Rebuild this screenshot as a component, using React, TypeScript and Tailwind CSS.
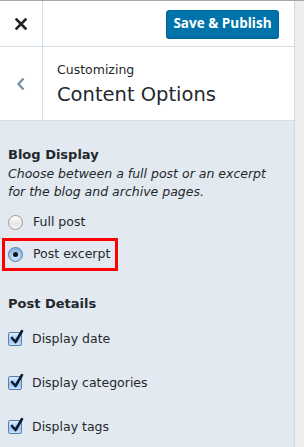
import React from 'react';

const font = { fontFamily: '"DejaVu Sans", "Open Sans", sans-serif' };

const Radio = ({ checked }: { checked?: boolean }) => (
    <span
        className={`w-[15px] h-[15px] rounded-full border flex items-center justify-center shrink-0 ${
            checked
                ? 'border-[#5a7fae] bg-[radial-gradient(circle_at_50%_70%,#d6ecff_0%,#9cc4ef_55%,#6a9fd8_100%)]'
                : 'border-[#9a9a9a] bg-[linear-gradient(#ffffff,#e6e6e6_60%,#f6f6f6)]'
        }`}
    >
        {checked && <span className="w-[5px] h-[5px] rounded-full bg-[#111]" />}
    </span>
);

const Checkbox = () => (
    <span className="relative w-[14px] h-[14px] rounded-[2px] border border-[#5a7fae] bg-[linear-gradient(#d9ecff,#9cc7f2_60%,#c5e2ff)] shrink-0">
        <svg className="absolute -top-[4px] left-[1px]" width="14" height="16" viewBox="0 0 14 16">
            <path d="M2 9 L5.5 13 L12 2" fill="none" stroke="#0d1b2e" strokeWidth="2.6" strokeLinecap="round" strokeLinejoin="round" />
        </svg>
    </span>
);

export default function App() {
    return (
        <div className="w-[304px] h-[447px] bg-[#eeeeee] border-t border-[#a7a7a7] overflow-hidden" style={font}>
            <div className="w-[295px] h-full bg-[#e3e9f0] border-r border-[#cfdae5] flex flex-col">
                <div className="h-[46px] bg-white border-b border-[#d3dee8] flex">
                    <div className="w-[43px] border-r border-[#d3dee8] flex items-center justify-center">
                        <svg width="12" height="12" viewBox="0 0 12 12">
                            <path d="M1.5 1.5 L10.5 10.5 M10.5 1.5 L1.5 10.5" stroke="#1d2327" strokeWidth="2.6" strokeLinecap="square" />
                        </svg>
                    </div>
                    <div className="flex-1 flex items-center justify-end pr-[15px]">
                        <button
                            className="h-[28px] w-[113px] rounded-[3px] bg-[#0073aa] border border-[#006799] shadow-[0_1px_0_#006799] text-white text-[13.5px] font-bold"
                            style={{ fontFamily: '"Open Sans", sans-serif' }}
                        >
                            Save &amp; Publish
                        </button>
                    </div>
                </div>
                <div className="h-[74px] bg-white border-b border-[#d3dee8] flex">
                    <div className="w-[43px] border-r border-[#d3dee8] flex items-center justify-center">
                        <svg width="10" height="14" viewBox="0 0 10 14">
                            <path d="M7.5 1.5 L2.5 7 L7.5 12.5" fill="none" stroke="#7593ad" strokeWidth="2.4" />
                        </svg>
                    </div>
                    <div className="flex-1 pl-[14px] pt-[14px] text-[#23282d]">
                        <div className="text-[12.5px] leading-[18px]">Customizing</div>
                        <div className="text-[19.5px] leading-[26px] mt-[3px]">Content Options</div>
                    </div>
                </div>
                <div className="px-[8px] pt-[25px] text-[#23282d]">
                    <div className="text-[13px] font-bold leading-[18px]">Blog Display</div>
                    <div className="text-[12.5px] italic leading-[18px] mt-[1px]">
                        Choose between a full post or an excerpt for the blog and archive pages.
                    </div>
                    <div className="flex items-center gap-[10px] mt-[12px] text-[12.5px] h-[18px]">
                        <Radio />
                        <span>Full post</span>
                    </div>
                    <div className="mt-[7px] -ml-[6px] w-[116px] h-[33px] border-[3px] border-[#ff0000] flex items-center gap-[10px] pl-[3px] text-[12.5px]">
                        <Radio checked />
                        <span>Post excerpt</span>
                    </div>
                    <div className="text-[13px] font-bold leading-[18px] mt-[24px]">Post Details</div>
                    <div className="flex flex-col gap-[26px] mt-[17px] text-[12.5px]">
                        {['Display date', 'Display categories', 'Display tags'].map((label) => (
                            <div key={label} className="flex items-center gap-[10px] h-[18px]">
                                <Checkbox />
                                <span>{label}</span>
                            </div>
                        ))}
                    </div>
                </div>
            </div>
        </div>
    );
}
